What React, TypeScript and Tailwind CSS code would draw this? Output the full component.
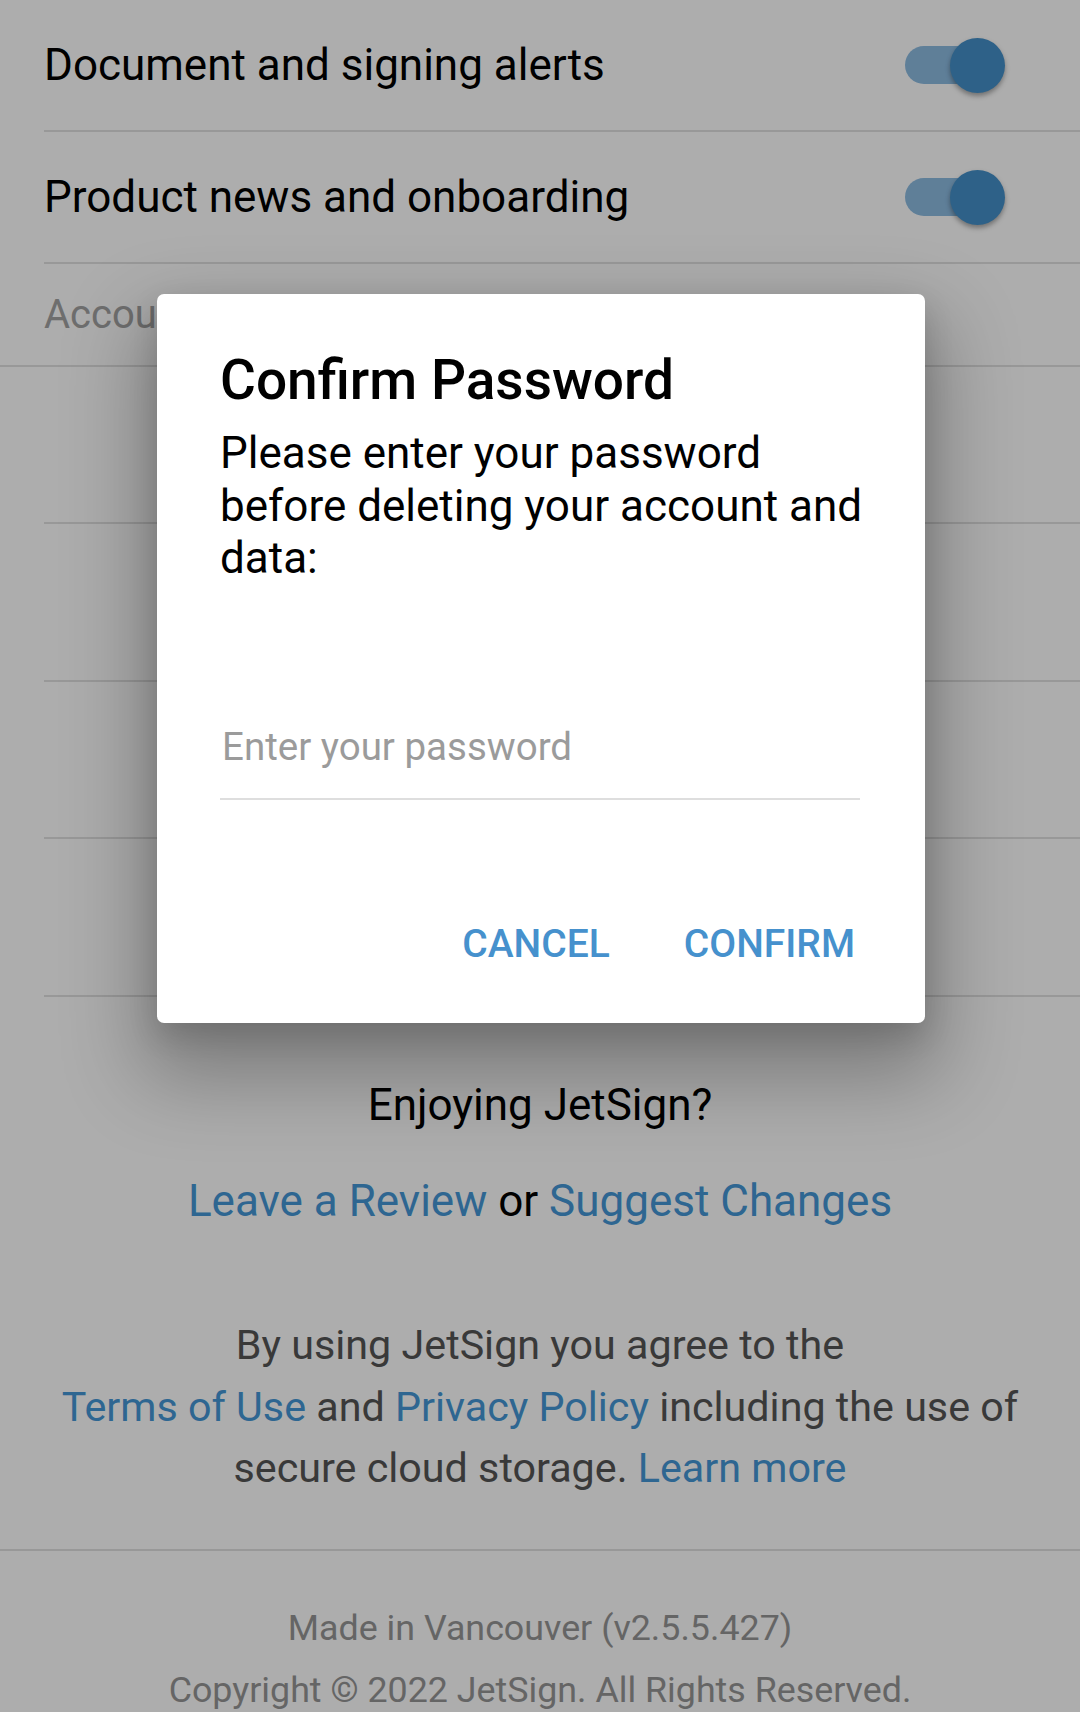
import React from "react";

function Toggle() {
  return (
    <div className="flex items-center">
      <div className="w-[91px] h-[38px] rounded-full bg-[#8cbbe1]" />
      <div className="w-[55px] h-[55px] -ml-[46px] rounded-full bg-[#4490c9] shadow-[0_3px_5px_rgba(0,0,0,0.35)]" />
    </div>
  );
}

function ToggleRow({ label }: { label: string }) {
  return (
    <div className="h-[132px] ml-[44px] border-b-2 border-[#e0e0e0] flex items-center justify-between pr-[75px]">
      <span className="text-[44px] leading-[52px] text-black">{label}</span>
      <Toggle />
    </div>
  );
}

function ActionRow({ label, tall }: { label: string; tall?: boolean }) {
  return (
    <div
      className={
        (tall ? "h-[158px] " : "h-[157px] ") +
        "ml-[44px] border-b-2 border-[#e0e0e0] flex items-center justify-center pr-[44px]"
      }
    >
      <span className="text-[38px] leading-[44px] font-medium text-[#4691cd]">{label}</span>
    </div>
  );
}

export default function App() {
  return (
    <div className="relative w-[1080px] h-[1712px] overflow-hidden bg-white font-['Roboto',sans-serif] text-black">
      <ToggleRow label="Document and signing alerts" />
      <ToggleRow label="Product news and onboarding" />
      <div className="h-[103px] border-b-2 border-[#e0e0e0] pl-[44px] flex items-center">
        <span className="text-[40px] leading-[48px] text-[#a3a3a3]">Account</span>
      </div>
      <ActionRow label="MANAGE SUBSCRIPTION" />
      <ActionRow label="DELETE ACCOUNT" tall />
      <ActionRow label="CHANGE PASSWORD" />
      <ActionRow label="LOGOUT" tall />

      <div className="pt-[82px] pb-[49px] border-b-2 border-[#e0e0e0] flex flex-col items-center text-center">
        <div className="text-[44px] leading-[52px] text-black">Enjoying JetSign?</div>
        <div className="mt-[44px] text-[44px] leading-[52px] text-black whitespace-nowrap">
          <span className="text-[#4597d6]">Leave a Review</span> or{" "}
          <span className="text-[#4597d6]">Suggest Changes</span>
        </div>
        <div className="mt-[88px] text-[41.25px] leading-[61.5px] text-[#555555] whitespace-nowrap">
          <div>By using JetSign you agree to the</div>
          <div>
            <span className="text-[#4597d6]">Terms of Use</span> and{" "}
            <span className="text-[#4597d6]">Privacy Policy</span> including the use of
          </div>
          <div>
            secure cloud storage. <span className="text-[#4597d6]">Learn more</span>
          </div>
        </div>
      </div>

      <div className="pt-[46px] flex flex-col items-center text-[35.8px] leading-[62px] text-[#969696] whitespace-nowrap">
        <div>Made in Vancouver (v2.5.5.427)</div>
        <div>Copyright © 2022 JetSign. All Rights Reserved.</div>
      </div>

      {/* Modal overlay */}
      <div className="absolute inset-0 bg-black/[0.32]" />
      <div className="absolute left-[157px] top-[294px] w-[768px] h-[729px] bg-white rounded-[7px] shadow-[0_40px_80px_16px_rgba(0,0,0,0.28),0_12px_30px_rgba(0,0,0,0.14)] pl-[63px] pr-[65px] pt-[54px] flex flex-col">
        <div className="text-[55px] leading-[64px] font-medium text-black">Confirm Password</div>
        <div className="mt-[15px] text-[44px] leading-[52.5px] text-black whitespace-nowrap">
          <div>Please enter your password</div>
          <div>before deleting your account and</div>
          <div>data:</div>
        </div>
        <div className="mt-[138px] pb-[27px] border-b-2 border-[#dedede]">
          <input
            type="password"
            placeholder="Enter your password"
            className="block w-full h-[48px] pl-[2px] text-[38.5px] leading-[48px] bg-transparent outline-none text-black placeholder:text-[#9b9b9b]"
          />
        </div>
        <div className="mt-[122px] flex justify-end">
          <button className="mr-[74px] text-[39px] leading-[44px] font-medium text-[#4691cd]">CANCEL</button>
          <button className="mr-[5px] text-[39px] leading-[44px] font-medium text-[#4691cd]">CONFIRM</button>
        </div>
      </div>
    </div>
  );
}
